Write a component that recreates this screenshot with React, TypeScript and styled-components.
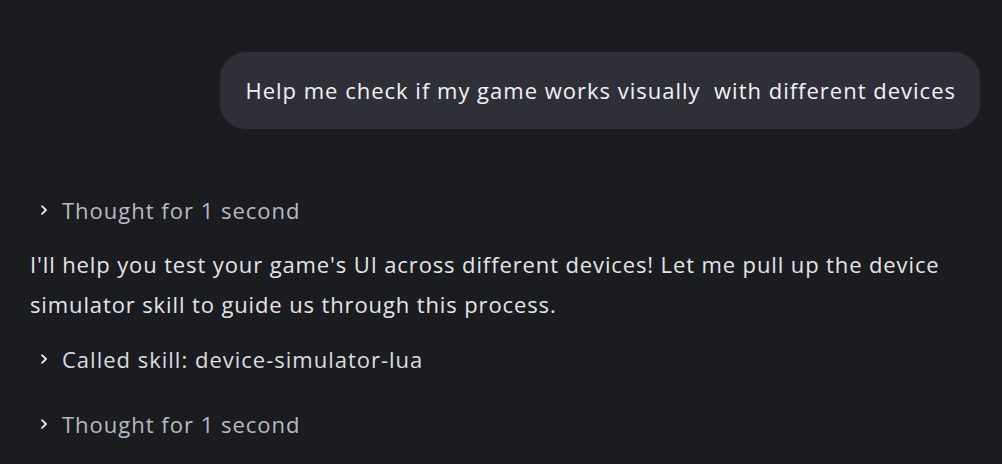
import React from "react";
import styled, { createGlobalStyle } from "styled-components";

const Global = createGlobalStyle`
  html, body { margin: 0; padding: 0; background: #1b1c20; }
  body { font-family: "Open Sans", "Liberation Sans", sans-serif; }
`;

const Page = styled.div`
  width: 1002px;
  height: 464px;
  box-sizing: border-box;
  padding: 52px 22px 0 30px;
  display: flex;
  flex-direction: column;
  overflow: hidden;
  letter-spacing: 1px;
`;

const UserRow = styled.div`
  display: flex;
  justify-content: flex-end;
`;

const Bubble = styled.div`
  background: #2f2f38;
  color: #f2f2f4;
  border-radius: 26px;
  padding: 24px 24px 24px 25px;
  font-size: 22px;
  line-height: 29px;
  white-space: pre;
`;

const Toggle = styled.div<{ $tone: "muted" | "bright"; $top: number }>`
  display: flex;
  align-items: center;
  gap: 12px;
  margin-top: ${(p) => p.$top}px;
  padding-left: 8px;
  height: 40px;
  font-size: 22px;
  color: ${(p) => (p.$tone === "muted" ? "#b9b9c1" : "#dcdce0")};
`;

const Chevron = styled.svg`
  width: 12px;
  height: 12px;
  flex: none;
`;

const Paragraph = styled.p`
  margin: 14px 0 0;
  font-size: 22px;
  line-height: 40px;
  letter-spacing: 0.88px;
  color: #e4e4e8;
`;

const Chev = () => (
  <Chevron viewBox="0 0 12 12">
    <polyline points="4,2.2 8,6 4,9.8" fill="none" stroke="#ececf0" strokeWidth="1.8" strokeLinecap="round" strokeLinejoin="round" />
  </Chevron>
);

export default function App() {
  return (
    <>
      <Global />
      <Page>
        <UserRow>
          <Bubble>{"Help me check if my game works visually  with different devices"}</Bubble>
        </UserRow>
        <Toggle $tone="muted" $top={61}>
          <Chev />
          Thought for 1 second
        </Toggle>
        <Paragraph>
          I'll help you test your game's UI across different devices! Let me pull up the device simulator skill to guide us through this process.
        </Paragraph>
        <Toggle $tone="bright" $top={15}>
          <Chev />
          Called skill: device-simulator-lua
        </Toggle>
        <Toggle $tone="muted" $top={25}>
          <Chev />
          Thought for 1 second
        </Toggle>
      </Page>
    </>
  );
}
